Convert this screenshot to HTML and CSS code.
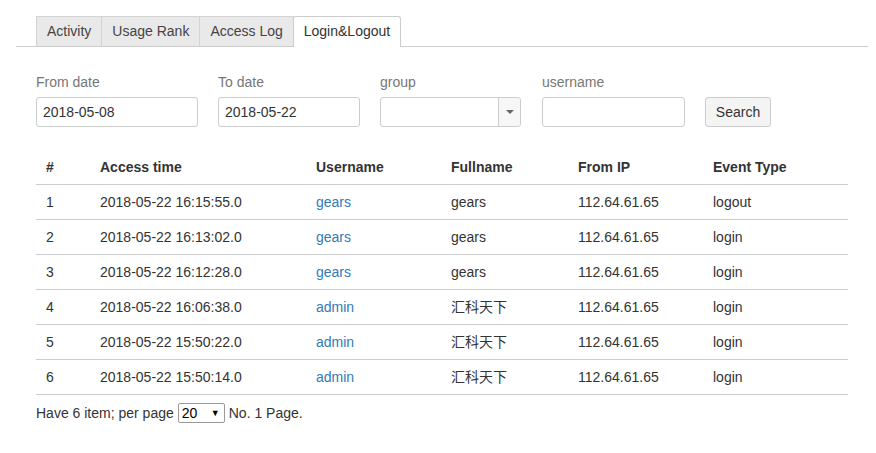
FILE: index.html
```html
<!DOCTYPE html>
<html>
<head>
<meta charset="utf-8">
<link rel="stylesheet" href="styles.css">
</head>
<body>
<div class="page">
  <ul class="tabs">
    <li class="tab">Activity</li>
    <li class="tab">Usage Rank</li>
    <li class="tab">Access Log</li>
    <li class="tab active">Login&amp;Logout</li>
  </ul>
  <div class="content">
    <div class="filters">
      <div class="field f-from">
        <label>From date</label>
        <div class="input">2018-05-08</div>
      </div>
      <div class="field f-to">
        <label>To date</label>
        <div class="input">2018-05-22</div>
      </div>
      <div class="field f-group">
        <label>group</label>
        <div class="combo">
          <div class="combo-text"></div>
          <div class="combo-btn"><span class="caret"></span></div>
        </div>
      </div>
      <div class="field f-user">
        <label>username</label>
        <div class="input"></div>
      </div>
      <div class="field f-btn">
        <button class="btn">Search</button>
      </div>
    </div>
    <table class="grid">
      <thead>
        <tr><th class="c1">#</th><th class="c2">Access time</th><th class="c3">Username</th><th class="c4">Fullname</th><th class="c5">From IP</th><th class="c6">Event Type</th></tr>
      </thead>
      <tbody>
        <tr><td>1</td><td>2018-05-22 16:15:55.0</td><td><a>gears</a></td><td>gears</td><td>112.64.61.65</td><td>logout</td></tr>
        <tr><td>2</td><td>2018-05-22 16:13:02.0</td><td><a>gears</a></td><td>gears</td><td>112.64.61.65</td><td>login</td></tr>
        <tr><td>3</td><td>2018-05-22 16:12:28.0</td><td><a>gears</a></td><td>gears</td><td>112.64.61.65</td><td>login</td></tr>
        <tr><td>4</td><td>2018-05-22 16:06:38.0</td><td><a>admin</a></td><td>汇科天下</td><td>112.64.61.65</td><td>login</td></tr>
        <tr><td>5</td><td>2018-05-22 15:50:22.0</td><td><a>admin</a></td><td>汇科天下</td><td>112.64.61.65</td><td>login</td></tr>
        <tr><td>6</td><td>2018-05-22 15:50:14.0</td><td><a>admin</a></td><td>汇科天下</td><td>112.64.61.65</td><td>login</td></tr>
      </tbody>
    </table>
    <div class="pager">
      <span>Have 6 item; per page</span>
      <span class="perpage"><span>20</span><span class="tri">▼</span></span>
      <span>No. 1 Page.</span>
    </div>
  </div>
</div>
</body>
</html>
```

FILE: styles.css
```css
html, body {
  margin: 0;
  padding: 0;
  background: #fff;
}
body {
  font-family: "Liberation Sans", Arial, "Noto Sans CJK SC", sans-serif;
  font-size: 14px;
  color: #333;
}
.page {
  padding: 16px 8px 0 16px;
}
.tabs {
  list-style: none;
  margin: 0;
  padding: 0 0 0 20px;
  display: flex;
  border-bottom: 1px solid #ccc;
}
.tab {
  padding: 4px 10px 5px;
  line-height: 20px;
  background: #e9e9e9;
  border: 1px solid #d4d4d4;
  border-bottom: none;
  margin-right: -1px;
  color: #444;
}
.tab.active {
  background: #fff;
  border-color: #ccc;
  margin-bottom: -1px;
  padding-bottom: 6px;
  border-radius: 3px 3px 0 0;
  color: #333;
}
.content {
  padding: 0 20px;
}
.filters {
  display: flex;
  align-items: flex-end;
  margin-top: 25px;
}
.field {
  display: flex;
  flex-direction: column;
}
.field label {
  color: #777;
  line-height: 20px;
  margin-bottom: 5px;
}
.f-from { width: 162px; margin-right: 20px; }
.f-to { width: 142px; margin-right: 20px; }
.f-group { width: 141px; margin-right: 21px; }
.f-user { width: 143px; margin-right: 20px; }
.input {
  box-sizing: border-box;
  height: 30px;
  border: 1px solid #ccc;
  border-radius: 3px;
  padding: 0 6px;
  line-height: 28px;
  color: #333;
}
.combo {
  box-sizing: border-box;
  height: 30px;
  border: 1px solid #ccc;
  border-radius: 3px;
  display: flex;
}
.combo-text {
  flex: 1;
}
.combo-btn {
  width: 21px;
  border-left: 1px solid #ccc;
  background: #f7f7f7;
  display: flex;
  align-items: center;
  justify-content: center;
  border-radius: 0 3px 3px 0;
}
.caret {
  width: 0;
  height: 0;
  border-left: 4px solid transparent;
  border-right: 4px solid transparent;
  border-top: 4px solid #666;
}
.btn {
  box-sizing: border-box;
  height: 30px;
  width: 66px;
  border: 1px solid #ccc;
  border-radius: 3px;
  background: #f4f4f4;
  font-family: inherit;
  font-size: 14px;
  color: #333;
  padding: 0;
}
.grid {
  margin-top: 23px;
  width: 812px;
  border-collapse: collapse;
}
.grid th, .grid td {
  text-align: left;
  padding: 7px 10px;
  line-height: 20px;
  border-bottom: 1px solid #ccc;
}
.grid th {
  font-weight: bold;
  padding-top: 7px;
  padding-bottom: 7px;
}
.c1 { width: 34px; }
.c2 { width: 196px; }
.c3 { width: 115px; }
.c4 { width: 107px; }
.c5 { width: 115px; }
.grid a {
  color: #337ab7;
}
.pager {
  display: flex;
  align-items: center;
  margin-top: 8px;
  line-height: 20px;
}
.perpage {
  box-sizing: border-box;
  display: inline-flex;
  justify-content: space-between;
  align-items: center;
  width: 47px;
  height: 20px;
  border: 1px solid #999;
  border-radius: 2px;
  margin: 0 4px;
  padding: 0 4px 0 3px;
  color: #000;
  font-size: 14px;
}
.tri {
  font-size: 9px;
}
```
